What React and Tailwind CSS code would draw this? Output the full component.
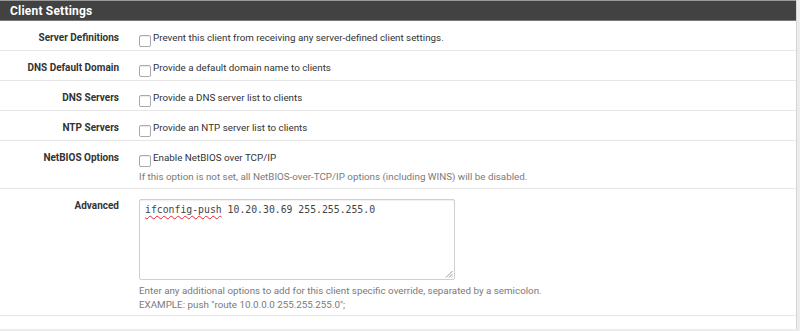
import React from "react";

const font = { fontFamily: "Roboto, 'Liberation Sans', sans-serif" };

function Checkbox() {
  return (
    <span className="mt-[4px] inline-block h-[12px] w-[12px] shrink-0 rounded-[2px] border border-[#a9a9a9] bg-white shadow-[inset_0_1px_1px_rgba(0,0,0,0.08)]" />
  );
}

function Row({ label, children, className = "" }) {
  return (
    <div className={`flex border-b border-[#e6e6e6] ${className}`}>
      <div className="w-[119px] shrink-0 text-right text-[10px] font-bold leading-[14px] text-[#333]">
        {label}
      </div>
      <div className="ml-[20px] flex-1">{children}</div>
    </div>
  );
}

function CheckRow({ label, text }) {
  return (
    <Row label={label} className="h-[30px] pt-[10px]">
      <label className="flex items-start gap-[2px] text-[9.8px] leading-[14px] text-[#333]">
        <Checkbox />
        <span>{text}</span>
      </label>
    </Row>
  );
}

export default function App() {
  return (
    <div className="h-[331px] w-[800px] overflow-hidden bg-[#ececec]" style={font}>
      <div className="h-[329px] w-[797px] border-r border-[#d6d6d6] bg-white">
        {/* Panel heading */}
        <div className="flex h-[21px] items-center border-t border-[#9a9a9a] border-b border-b-[#7a7a7a] bg-[#424242] px-[10px]">
          <h2 className="text-[12px] font-bold tracking-[0.2px] text-white">Client Settings</h2>
        </div>

        <CheckRow
          label="Server Definitions"
          text="Prevent this client from receiving any server-defined client settings."
        />
        <CheckRow label="DNS Default Domain" text="Provide a default domain name to clients" />
        <CheckRow label="DNS Servers" text="Provide a DNS server list to clients" />
        <CheckRow label="NTP Servers" text="Provide an NTP server list to clients" />

        <Row label="NetBIOS Options" className="h-[48px] pt-[10px]">
          <label className="flex items-start gap-[2px] text-[9.8px] leading-[14px] text-[#333]">
            <Checkbox />
            <span>Enable NetBIOS over TCP/IP</span>
          </label>
          <p className="mt-[3px] text-[9.8px] leading-[14px] text-[#7a7a7a]">
            If this option is not set, all NetBIOS-over-TCP/IP options (including WINS) will be disabled.
          </p>
        </Row>

        <Row label="Advanced" className="h-[127px] pt-[10px]">
          <div className="relative h-[81px] w-[316px] rounded-[2px] border border-[#cfcfcf] bg-white px-[5px] pt-[3px] shadow-[inset_0_1px_1px_rgba(0,0,0,0.06)]">
            <div
              className="text-[9.8px] leading-[14px] text-[#444]"
              style={{ fontFamily: "'DejaVu Sans Mono', 'Liberation Mono', monospace" }}
            >
              <span className="underline decoration-wavy decoration-[#e23] decoration-1 underline-offset-[2px]">
                ifconfig-push
              </span>{" "}
              10.20.30.69 255.255.255.0
            </div>
            <svg
              className="absolute bottom-[1px] right-[1px]"
              width="8"
              height="8"
              viewBox="0 0 8 8"
              stroke="#9a9a9a"
              strokeWidth="1"
            >
              <line x1="7.5" y1="1" x2="1" y2="7.5" />
              <line x1="7.5" y1="4" x2="4" y2="7.5" />
              <line x1="7.5" y1="6.5" x2="6.5" y2="7.5" />
            </svg>
          </div>
          <div className="mt-[4px] text-[9.8px] leading-[14px] text-[#7a7a7a]">
            <p>Enter any additional options to add for this client specific override, separated by a semicolon.</p>
            <p>EXAMPLE: push "route 10.0.0.0 255.255.255.0";</p>
          </div>
        </Row>
      </div>
    </div>
  );
}
